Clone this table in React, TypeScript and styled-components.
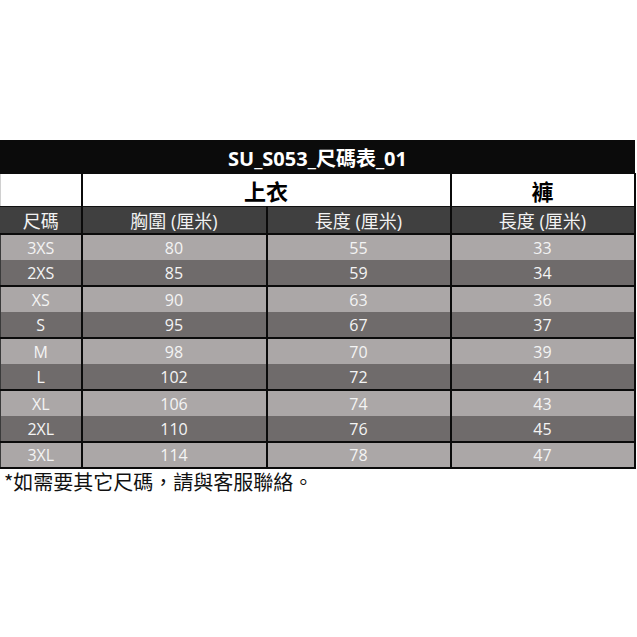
import React from "react";
import styled, { createGlobalStyle } from "styled-components";

const sizes = [
	{ size: "3XS", chest: 80, top: 55, pants: 33 },
	{ size: "2XS", chest: 85, top: 59, pants: 34 },
	{ size: "XS", chest: 90, top: 63, pants: 36 },
	{ size: "S", chest: 95, top: 67, pants: 37 },
	{ size: "M", chest: 98, top: 70, pants: 39 },
	{ size: "L", chest: 102, top: 72, pants: 41 },
	{ size: "XL", chest: 106, top: 74, pants: 43 },
	{ size: "2XL", chest: 110, top: 76, pants: 45 },
	{ size: "3XL", chest: 114, top: 78, pants: 47 },
];

const GlobalStyle = createGlobalStyle`
  body {
    margin: 0;
    background: #ffffff;
    font-family: "Open Sans", "Noto Sans CJK TC", sans-serif;
  }
`;

const App: React.FC = () => {
	return (
		<>
			<GlobalStyle />
			<Page>
				<Table>
					<colgroup>
						<col />
						<col />
						<col />
						<col />
					</colgroup>
					<thead>
						<TitleRow>
							<th colSpan={4}>SU_S053_尺碼表_01</th>
						</TitleRow>
						<GroupRow>
							<th />
							<th colSpan={2}>上衣</th>
							<th>褲</th>
						</GroupRow>
						<HeadRow>
							<th>尺碼</th>
							<th>胸圍 (厘米)</th>
							<th>長度 (厘米)</th>
							<th>長度 (厘米)</th>
						</HeadRow>
					</thead>
					<tbody>
						{sizes.map((s, i) => (
							<DataRow key={s.size} $dark={i % 2 === 1}>
								<td>{s.size}</td>
								<td>{s.chest}</td>
								<td>{s.top}</td>
								<td>{s.pants}</td>
							</DataRow>
						))}
					</tbody>
				</Table>
				<Note>*如需要其它尺碼，請與客服聯絡。</Note>
			</Page>
		</>
	);
};

const Page = styled.div`
  padding-top: 140px;
  width: 637px;
`;

const Table = styled.table`
  width: 634px;
  table-layout: fixed;
  border-collapse: collapse;

  col:nth-child(1) {
    width: 81px;
  }
  col:nth-child(2) {
    width: 185px;
  }
  col:nth-child(3) {
    width: 184px;
  }
  col:nth-child(4) {
    width: 184px;
  }

  th,
  td {
    padding: 0;
    text-align: center;
    white-space: nowrap;
  }
`;

const TitleRow = styled.tr`
  height: 33px;
  background: #0b0b0b;

  th {
    color: #ffffff;
    font-size: 20px;
    font-weight: 700;
    border: 1px solid #0b0b0b;
  }
`;

const GroupRow = styled.tr`
  height: 32px;
  background: #ffffff;

  th {
    color: #000000;
    font-size: 22px;
    font-weight: 700;
    border-left: 2px solid #0b0b0b;
    border-right: 2px solid #0b0b0b;
    border-bottom: 1px solid #111111;
  }

  th:first-child {
    border-left: 1px solid #d0d0d0;
  }
`;

const HeadRow = styled.tr`
  height: 27px;
  background: #404040;

  th {
    color: #f2f2f2;
    font-size: 18px;
    font-weight: 400;
    border-left: 2px solid #0b0b0b;
    border-right: 2px solid #0b0b0b;
    border-bottom: 2px solid #0b0b0b;
  }

  th:first-child {
    border-left: 1px solid #404040;
  }
`;

const DataRow = styled.tr<{ $dark: boolean }>`
  height: 26px;
  background: ${({ $dark }) => ($dark ? "#6f6b6b" : "#aba7a7")};

  td {
    color: #f4f4f4;
    font-size: 16px;
    line-height: 22px;
    border-left: 2px solid #0b0b0b;
    border-right: 2px solid #0b0b0b;
    border-bottom: ${({ $dark }) => ($dark ? "2px solid #0b0b0b" : "none")};
  }

  td:first-child {
    border-left: 1px solid #3a3a3a;
  }

  &:last-child td {
    border-bottom: 2px solid #0b0b0b;
  }
`;

const Note = styled.p`
  margin: 1px 0 0 4px;
  font-size: 20px;
  line-height: 24px;
  color: #111111;
  font-family: "Noto Sans CJK TC", "Noto Sans", sans-serif;
`;

export default App;
